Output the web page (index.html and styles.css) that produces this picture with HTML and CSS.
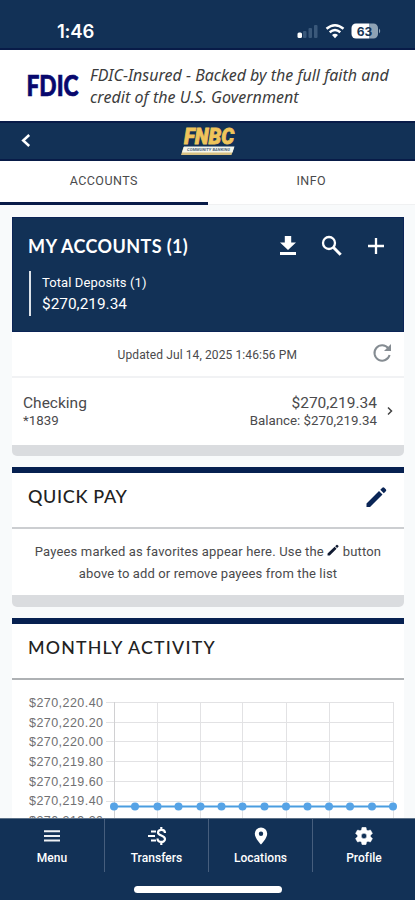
FILE: index.html
```html
<!DOCTYPE html>
<html lang="en">
<head>
<meta charset="utf-8">
<meta name="viewport" content="width=device-width, initial-scale=1">
<title>Accounts</title>
<link rel="stylesheet" href="styles.css">
</head>
<body>
<div class="phone">
  <header class="status">
    <span class="clock">1:46</span>
    <svg class="status-icons" width="86" height="18" viewBox="0 0 86 18">
      <g fill="#3a587a"><rect x="7" y="8" width="3.500" height="7" rx="1"/><rect x="12.500" y="5" width="3.500" height="10" rx="1"/><rect x="18" y="2" width="3.500" height="13" rx="1"/></g>
      <rect x="1.500" y="9.500" width="4.500" height="5.500" rx="1.500" fill="#fff"/>
      <g fill="none" stroke="#fff" stroke-width="2.500"><path d="M30.500 5.700q8.500-7 17 0M33.700 9.200q5.300-4.400 10.600 0"/></g>
      <path d="M36 12q3-2.500 6 0l-3 3.200z" fill="#fff"/>
      <path d="M60 .5h13v15H60a4.500 4.500 0 0 1-4.500-4.500V5A4.500 4.500 0 0 1 60 .5z" fill="#fff"/>
      <path d="M73 .5h4.500A4.500 4.500 0 0 1 82 5v6a4.500 4.500 0 0 1-4.500 4.500H73zM83 5.500q2.500 2.500 0 5z" fill="#8fa3b5"/>
      <text class="battery" x="68.500" y="12.500" text-anchor="middle">63</text>
    </svg>
  </header>

  <section class="fdic">
    <svg class="fdic-logo" width="64" height="42" viewBox="0 0 64 42"><text x=".5" y="31.500" textLength="52" lengthAdjust="spacingAndGlyphs">FDIC</text></svg>
    <p class="fdic-text"><span>FDIC-Insured - Backed by the full faith and</span><br><span class="fdic-b">credit of the U.S. Government</span></p>
  </section>

  <nav class="topbar">
    <svg class="back" width="12" height="16" viewBox="0 0 12 16"><path d="M9.200 2 3.200 7.500l6 5.500" fill="none" stroke="#fff" stroke-width="2.500"/></svg>
    <svg class="brand" width="70" height="32" viewBox="-4 0 70 32">
      <text class="brand-name" x="4" y="19.300" textLength="50" lengthAdjust="spacingAndGlyphs">FNBC</text>
      <path d="M3.500 22H54l-2.500 8H1z" fill="#d8c283"/>
      <path d="M4 21.500h50.500L52.500 27.500H2z" fill="#f4f6ed"/>
      <text class="brand-sub" x="7" y="26.200" textLength="43">COMMUNITY BANKING</text>
    </svg>
  </nav>

  <div class="tabs">
    <div class="tab active">ACCOUNTS</div>
    <div class="tab info">INFO</div>
  </div>

  <main class="content">
    <section class="card">
      <div class="summary">
        <div class="summary-top">
          <h2 class="title title-light">MY ACCOUNTS (1)</h2>
          <div class="actions">
            <svg width="18" height="22" viewBox="0 0 18 22"><path d="M5.800 1h6.400v6.500H17L9 15 1 7.500h4.800zM1 17h16v3H1z" fill="#fff"/></svg>
            <svg width="22" height="22" viewBox="0 0 22 22"><g fill="none" stroke="#fff"><circle cx="8" cy="8" r="6" stroke-width="2.300"/><path d="m12.500 12.500 7.200 7.200" stroke-width="3"/></g></svg>
            <svg width="18" height="22" viewBox="0 0 18 22"><path d="M1 11h16M9 3v16" stroke="#fff" stroke-width="2.300"/></svg>
          </div>
        </div>
        <div class="deposits"><div class="dep-label">Total Deposits (1)</div><div class="dep-value">$270,219.34</div></div>
      </div>
      <div class="updated">
        <span>Updated Jul 14, 2025 1:46:56 PM</span>
        <svg class="refresh" width="20" height="20" viewBox="0 0 20 20"><path d="M16.300 5.300A7.700 7.700 0 1 0 17.600 12" fill="none" stroke="#858c92" stroke-width="2"/><path d="M19 1v7h-7z" fill="#858c92"/></svg>
      </div>
      <div class="account">
        <div><div class="acct-name">Checking</div><div class="acct-no">*1839</div></div>
        <div class="amounts"><div class="amount">$270,219.34</div><div class="balance">Balance: $270,219.34</div></div>
        <svg class="chev" width="6" height="10" viewBox="0 0 6 10"><path d="m1 1.500 3.500 3.500L1 8.500" fill="none" stroke="#444" stroke-width="1.500"/></svg>
      </div>
      <div class="foot"></div>
    </section>

    <section class="card ruled quick">
      <div class="head"><h2 class="title title-quick">QUICK PAY</h2>
        <svg class="pencil" width="22" height="22" viewBox="0 0 22 22"><path d="M1.500 17.500 14 5l3.500 3.500L5 21H1.500zM15.300 3.700l2-2q1-1 2 0l1.500 1.500q1 1 0 2l-2 2z" fill="#0a2556"/></svg>
      </div>
      <div class="note"><div class="note-a">Payees marked as favorites appear here. Use the <svg class="mini" width="12" height="12" viewBox="0 0 22 22"><path d="M1 17.500 14 5l3.500 3.500L5 21H1zM15 4l2.300-2.300q1-1 2 0l1.500 1.500q1 1 0 2L18.500 7.500z" fill="#111b32"/></svg> button</div><div class="note-b">above to add or remove payees from the list</div></div>
      <div class="foot"></div>
    </section>

    <section class="card ruled monthly">
      <div class="head"><h2 class="title title-month">MONTHLY ACTIVITY</h2></div>
      <svg class="chart" width="392" height="150" viewBox="12 679 392 150">
        <g fill="none" stroke="#e2e2e4"><path d="M106 702.500H393.500M106 722.500H393.500M106 741.500H393.500M106 761.500H393.500M106 781.500H393.500M106 801.500H393.500M106 821.500H393.500"/><path d="M157.500 702V829M200.500 702V829M242.500 702V829M286.500 702V829M329.500 702V829M393.500 702V829"/><path d="M114.500 702V829" stroke="#d0d0d2"/></g>
        <g class="axis">
          <text x="29" y="706.500" textLength="74">$270,220.40</text><text x="29" y="726.500" textLength="74">$270,220.20</text><text x="29" y="746.300" textLength="74">$270,220.00</text><text x="29" y="766" textLength="74">$270,219.80</text><text x="29" y="785.700" textLength="74">$270,219.60</text><text x="29" y="805.300" textLength="74">$270,219.40</text><text x="29" y="824.500" textLength="74">$270,219.20</text>
        </g>
        <path d="M114 806.500H393" stroke="#4a9de0" stroke-width="2"/>
        <g fill="#56a3e6"><circle cx="114" cy="806.500" r="4"/><circle cx="135" cy="806.500" r="4"/><circle cx="157.500" cy="806.500" r="4"/><circle cx="178.500" cy="806.500" r="4"/><circle cx="200.500" cy="806.500" r="4"/><circle cx="221.500" cy="806.500" r="4"/><circle cx="242.500" cy="806.500" r="4"/><circle cx="264.500" cy="806.500" r="4"/><circle cx="286" cy="806.500" r="4"/><circle cx="307.500" cy="806.500" r="4"/><circle cx="329" cy="806.500" r="4"/><circle cx="350" cy="806.500" r="4"/><circle cx="372" cy="806.500" r="4"/><circle cx="393" cy="806.500" r="4"/></g>
      </svg>
    </section>
  </main>

  <footer class="bottom">
    <div class="items">
      <div class="item"><svg width="18" height="18" viewBox="0 0 18 18"><path d="M1 4.300h16M1 9h16M1 13.500h16" stroke="#eef1f4" stroke-width="2"/></svg><span>Menu</span></div>
      <div class="item"><svg width="20" height="18" viewBox="0 0 20 18"><path d="M4 4.500h5M1 9h7M4 13.500h5" stroke="#fff" stroke-width="1.800"/><path d="M18 6c0-4-7-4-7-.5C11 9 18 8 18 12c0 4-7.500 4-7.500-.5M14.300 0v3M14.300 15v3" fill="none" stroke="#fff" stroke-width="2.200"/></svg><span>Transfers</span></div>
      <div class="item"><svg width="18" height="18" viewBox="0 0 18 18"><path fill-rule="evenodd" d="M9 .5a6.200 6.200 0 0 0-6.200 6.200C2.800 11.200 9 17.500 9 17.500s6.200-6.300 6.200-10.800A6.200 6.200 0 0 0 9 .5zm0 4a2.200 2.200 0 1 1 0 4.400 2.200 2.200 0 0 1 0-4.400z" fill="#fff"/></svg><span>Locations</span></div>
      <div class="item"><svg width="20" height="18" viewBox="2 3 20 18"><path d="M19.140 12.940c.04-.3.06-.61.06-.94s-.02-.64-.07-.94l2.030-1.580a.49.49 0 0 0 .12-.61l-1.920-3.320a.49.49 0 0 0-.59-.22l-2.390.96a7 7 0 0 0-1.620-.94l-.36-2.540A.48.48 0 0 0 13.920 2.400h-3.840a.48.48 0 0 0-.48.410l-.36 2.540a7 7 0 0 0-1.620.94l-2.390-.96a.48.48 0 0 0-.59.220L2.720 8.870a.48.48 0 0 0 .12.610l2.030 1.580a7 7 0 0 0 0 1.880l-2.030 1.580a.49.49 0 0 0-.12.610l1.920 3.320c.12.220.37.290.59.220l2.390-.96c.5.380 1.030.7 1.620.94l.36 2.540c.05.240.24.410.48.410h3.840c.24 0 .44-.17.470-.41l.36-2.540a7 7 0 0 0 1.620-.94l2.390.96c.22.080.47 0 .59-.22l1.920-3.320a.48.48 0 0 0-.12-.61zM12 15a3 3 0 1 1 0-6 3 3 0 0 1 0 6z" transform="translate(12 12) scale(.9) translate(-12 -12)" fill="#fff" stroke="#fff" stroke-width=".5"/></svg><span>Profile</span></div>
    </div>
    <div class="home"></div>
  </footer>
</div>
</body>
</html>
```
FILE: styles.css
```css
* { box-sizing: border-box; }
body { margin: 0; font-family: Roboto, sans-serif; color: #4a4a4c; }
h2, p { margin: 0; font-weight: 400; }
svg { display: block; flex: none; }
.phone { width: 415px; height: 900px; overflow: hidden; display: flex; flex-direction: column; background: #f8fafb; }
.status { height: 50px; flex: none; background: #123156; border-bottom: 2px solid #081b48; display: flex; justify-content: space-between; padding: 19px 33px 0 57px; color: #fff; }
.clock { font: 600 18.5px/24px Inter, sans-serif; letter-spacing: -.2px; }
.status-icons { margin-top: 4px; }
.battery { font: 700 12px Inter, sans-serif; fill: #173455; }
.fdic { height: 71px; flex: none; background: #fff; display: flex; align-items: flex-start; padding: 14px 0 0 26px; }
.fdic-logo { font: 900 29px Lato, sans-serif; fill: #08086e; stroke: #08086e; stroke-width: .7px; }
.fdic-text { font: italic 400 16px/22px "Noto Sans", sans-serif; color: #3c3c3c; white-space: nowrap; }
.fdic-b { letter-spacing: .05px; }
.topbar { height: 40px; flex: none; background: #123156; border: solid #081b48; border-width: 2px 0; display: flex; align-items: center; padding-left: 20px; }
.brand { margin-left: 144px; overflow: visible; }
.brand-name { font: italic 900 22.5px Roboto, sans-serif; fill: #efc45b; stroke: #efc45b; stroke-width: .8; }
.brand-sub { font: italic 700 4px Roboto, sans-serif; fill: #48617a; }
.tabs { height: 44px; flex: none; background: #fff; display: flex; border-bottom: 1px solid #f0f1f2; }
.tab { width: 208px; height: 44px; text-align: center; font-size: 12.5px; line-height: 40px; letter-spacing: .45px; border-bottom: 3px solid transparent; }
.tab.active { border-color: #081b48; }
.content { flex: 1; min-height: 0; overflow: hidden; padding: 11.5px 11px 0 12px; }
.card { margin-bottom: 11px; }
.summary { height: 115px; background: #123156; border: 1px solid #0b2456; color: #fff; padding: 16px 18px 0 16px; }
.summary-top { display: flex; justify-content: space-between; height: 24px; align-items: center; }
.title { font-family: Lato, sans-serif; font-weight: 500; font-size: 18px; line-height: 24px; white-space: nowrap; color: #222; }
.title-light { color: #fff; font-weight: 700; letter-spacing: .4px; margin-left: -1px; }
.title-quick { letter-spacing: .65px; }
.title-month { font-size: 17.8px; letter-spacing: 1.2px; }
.actions { display: flex; gap: 24px; align-items: center; }
.deposits { margin-top: 13px; height: 45px; border-left: 2px solid #dce2e9; padding: 2px 0 0 11px; }
.dep-label { font-size: 13px; line-height: 19px; letter-spacing: .1px; }
.dep-value { font-size: 15.4px; line-height: 25px; }
.updated { height: 46px; background: #fff; border-bottom: 2px solid #f1f2f4; display: flex; align-items: center; justify-content: flex-end; font-size: 12px; letter-spacing: .1px; padding: 3px 12px 0 0; }
.refresh { margin: -5px 0 0 75px; }
.account { height: 67px; background: #fff; display: flex; padding: 15.5px 11px 0 11px; }
.acct-name, .amount { font-size: 15.5px; line-height: 20px; }
.acct-no, .balance { font-size: 13.3px; line-height: 15px; }
.amounts { margin-left: auto; text-align: right; }
.chev { margin: 13px 0 0 10px; }
.foot { height: 11.5px; background: #dadcdf; border-radius: 0 0 5px 5px; }
.ruled { border-top: 6px solid #062050; background: #fff; }
.quick { height: 139.5px; border-radius: 0 0 5px 5px; }
.head { height: 56px; padding: 11px 17px 0 16px; border-bottom: 2px solid #ccced1; display: flex; justify-content: space-between; }
.pencil { margin-top: 2px; }
.note { height: 66px; padding-top: 12px; text-align: center; font-size: 13px; line-height: 22px; white-space: nowrap; }
.note-a { letter-spacing: .17px; }
.note-b { letter-spacing: .13px; }
.mini { display: inline-block; vertical-align: 0; }
.monthly .head { border-color: #aeb1b4; }
.axis { font: 12.5px "Liberation Sans", sans-serif; fill: #707072; }
.chart { margin-top: -.5px; }
.bottom { height: 82px; flex: none; background: #123156; border-top: 1px solid #5d7188; }
.items { display: grid; grid-template-columns: 105px 104px 104px 102px; height: 53px; }
.item { display: flex; flex-direction: column; align-items: center; padding-top: 8px; border-right: 1px solid #465e7d; color: #fff; font-size: 12px; font-weight: 500; letter-spacing: .05px; }
.item:last-child { border: 0; }
.item span { line-height: 16px; margin-top: 5px; }
.home { width: 148px; height: 7px; border-radius: 4px; background: #fff; margin: 14px 0 0 134px; }
```
